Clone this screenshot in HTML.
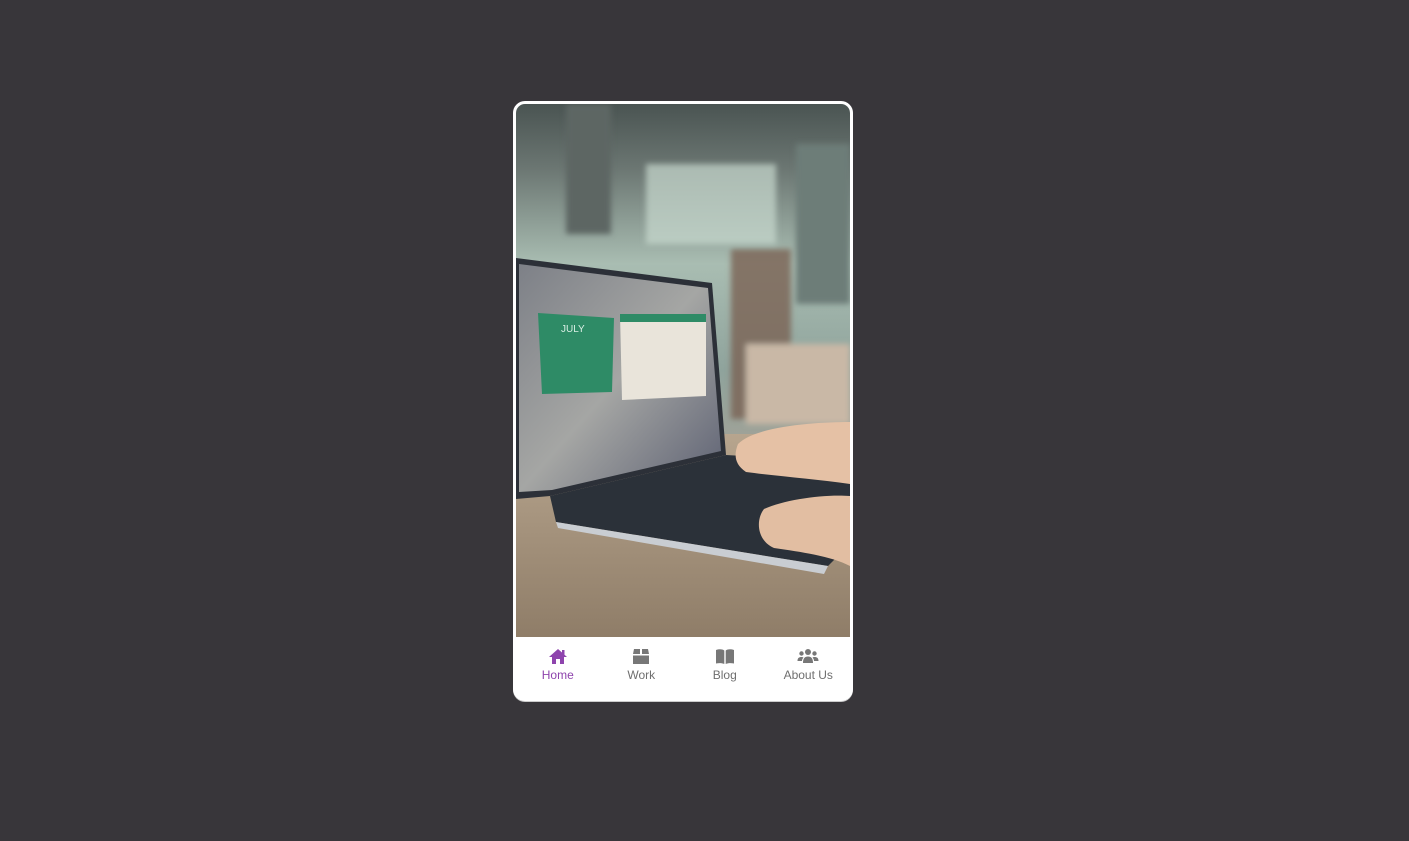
<!DOCTYPE html>
<html><head><style>
html,body{margin:0;padding:0;background:#38363a;width:1409px;height:841px;overflow:hidden;font-family:"Liberation Sans",sans-serif}
.frame{position:absolute;left:513px;top:101px;width:334px;height:594px;border:3px solid #fff;border-radius:12px;background:#fff;overflow:hidden;box-shadow:0 1px 0 #ccc}
.img{position:absolute;left:0;top:0;width:334px;height:533px}
.nav{position:absolute;left:0;top:533px;width:334px;height:61px;background:#fff;display:flex}
.nav div{flex:1;text-align:center;font-size:12px;color:#6f6f6f;padding-top:11px}
.nav div.a{color:#8e44ad}
.nav svg{display:block;margin:0 auto 3px;height:17px}
</style></head><body>
<div class="frame">
<svg class="img" viewBox="0 0 334 533" preserveAspectRatio="none">
<defs>
<linearGradient id="bg" x1="0" y1="0" x2="0" y2="1">
<stop offset="0" stop-color="#4a5452"/><stop offset="0.12" stop-color="#6b7672"/><stop offset="0.3" stop-color="#a9bdb2"/><stop offset="0.5" stop-color="#8fa39c"/><stop offset="0.7" stop-color="#a8a296"/><stop offset="1" stop-color="#a39480"/>
</linearGradient>
<linearGradient id="tb" x1="0" y1="0" x2="0" y2="1"><stop offset="0" stop-color="#b7a58e"/><stop offset="1" stop-color="#8f7d68"/></linearGradient>
<linearGradient id="scr" x1="0" y1="0" x2="1" y2="1"><stop offset="0" stop-color="#7d8087"/><stop offset="0.5" stop-color="#a5a6a4"/><stop offset="1" stop-color="#5c6072"/></linearGradient>
<filter id="bl"><feGaussianBlur stdDeviation="3"/></filter>
</defs>
<rect width="334" height="533" fill="url(#bg)"/>
<g filter="url(#bl)">
<rect x="50" y="0" width="45" height="130" fill="#5d6663"/>
<rect x="130" y="60" width="130" height="80" fill="#c7d9cf" opacity="0.7"/>
<rect x="280" y="40" width="54" height="160" fill="#6d7d78"/>
<rect x="215" y="145" width="60" height="170" fill="#7a6254" opacity="0.8"/>
<rect x="230" y="240" width="104" height="80" fill="#c9b8a6"/>
</g>
<rect x="0" y="330" width="334" height="203" fill="url(#tb)"/>
<polygon points="0,154 196,179 210,351 34,392 0,395" fill="#2c3038"/>
<polygon points="3,160 192,184 205,347 36,386 3,388" fill="url(#scr)"/>
<polygon points="22,209 98,214 96,288 26,290" fill="#2e8b66"/>
<text x="45" y="228" font-size="10" fill="#d8eee4">JULY</text>
<polygon points="104,210 190,213 190,292 106,296" fill="#e9e4da"/>
<rect x="104" y="210" width="86" height="8" fill="#2e8b66"/>
<polygon points="34,392 210,351 334,358 334,440 312,462 40,418" fill="#2b3139"/>
<polygon points="40,418 312,462 308,470 42,424" fill="#c9cdd2"/>
<path d="M222,340 C240,322 300,318 334,318 L334,380 C300,375 260,372 230,368 C218,360 218,350 222,340 Z" fill="#e5c1a5"/>
<path d="M248,405 C270,395 310,390 334,392 L334,462 C315,452 285,448 258,444 C240,436 240,415 248,405 Z" fill="#e2bea2"/>
</svg>
<div class="nav">
<div class="a"><svg viewBox="0 0 20 17"><path d="M10 1 L1 9 H4 V16 H8 V11 H12 V16 H16 V9 H19 Z" fill="#8e44ad"/><rect x="14" y="2" width="2.5" height="5" fill="#8e44ad"/></svg>Home</div>
<div><svg viewBox="0 0 20 17"><path d="M3 1 H9 V6 H2 Z M11 1 H17 L18 6 H11 Z M2 7.5 H18 V16 H2 Z" fill="#777"/></svg>Work</div>
<div><svg viewBox="0 0 20 17"><path d="M1 2 C4 1 7 1 9.3 2.5 V16 C7 15 4 15 1 15.5 Z M10.7 2.5 C13 1 16 1 19 2 V15.5 C16 15 13 15 10.7 16 Z" fill="#777"/></svg>Blog</div>
<div><svg viewBox="0 0 22 17"><circle cx="11" cy="4" r="3" fill="#777"/><circle cx="4.5" cy="5.5" r="2.2" fill="#777"/><circle cx="17.5" cy="5.5" r="2.2" fill="#777"/><path d="M6 15 C6 10 8 8.5 11 8.5 C14 8.5 16 10 16 15 Z M0.5 13 C0.5 10 2 9 4.5 9 C5.5 9 6 9.3 6.5 9.6 C5.3 10.8 5 12 5 13 Z M21.5 13 C21.5 10 20 9 17.5 9 C16.5 9 16 9.3 15.5 9.6 C16.7 10.8 17 12 17 13 Z" fill="#777"/></svg>About Us</div>
</div>
</div>
</body></html>
